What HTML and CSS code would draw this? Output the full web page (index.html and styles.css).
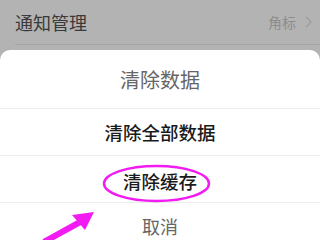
FILE: index.html
```html
<!DOCTYPE html>
<html lang="zh">
<head>
<meta charset="utf-8">
<link rel="stylesheet" href="styles.css">
</head>
<body>
<div class="screen">
  <div class="bg">
    <div class="row">
      <span class="row-label">通知管理</span>
      <span class="row-value">角标<svg class="chev" width="7" height="12" viewBox="0 0 7 12"><polyline points="1,1 6,6 1,11" fill="none" stroke="#9a9a9a" stroke-width="1.2"/></svg></span>
    </div>
  </div>
  <div class="sheet">
    <div class="sheet-title">清除数据</div>
    <div class="sheet-item">清除全部数据</div>
    <div class="sheet-item item-cache">清除缓存</div>
    <div class="sheet-cancel">取消</div>
  </div>
  <svg class="mark" width="320" height="240" viewBox="0 0 320 240">
    <ellipse cx="156.5" cy="183.5" rx="52.5" ry="17.5" fill="none" stroke="#f21cf2" stroke-width="2.5"/>
    <line x1="44" y1="242" x2="82" y2="221" stroke="#f21cf2" stroke-width="6"/>
    <polygon points="94,212 72,215 85,230" fill="#f21cf2"/>
  </svg>
</div>
</body>
</html>
```
FILE: styles.css
```css
html, body {
  margin: 0;
  padding: 0;
}
body {
  font-family: "Noto Sans CJK SC", "Noto Sans", sans-serif;
  background: #b3b3b3;
}
.screen {
  position: relative;
  width: 320px;
  height: 240px;
  overflow: hidden;
  background: #b3b3b3;
}
.bg {
  height: 50px;
}
.row {
  height: 45px;
  margin-left: 15px;
  padding-right: 8px;
  border-bottom: 1px solid #a6a6a6;
  display: flex;
  align-items: center;
  justify-content: space-between;
  box-sizing: border-box;
}
.row-label {
  font-size: 18px;
  color: #3a3a3a;
}
.row-value {
  font-size: 14px;
  color: #8c8c8c;
  display: flex;
  align-items: center;
}
.chev {
  margin-left: 9px;
  display: block;
}
.sheet {
  background: #fff;
  border-radius: 10px 10px 0 0;
  display: flex;
  flex-direction: column;
}
.sheet-title {
  height: 58px;
  display: flex;
  align-items: center;
  justify-content: center;
  font-size: 20px;
  color: #666;
  border-bottom: 1px solid #ececec;
}
.sheet-item {
  height: 46px;
  display: flex;
  align-items: center;
  justify-content: center;
  font-size: 18.5px;
  font-weight: 500;
  color: #1a1a1a;
  border-bottom: 1px solid #ececec;
}
.item-cache {
  height: 47px;
  padding-top: 4px;
  box-sizing: border-box;
}
.sheet-cancel {
  height: 46px;
  display: flex;
  align-items: center;
  justify-content: center;
  font-size: 18px;
  color: #666;
}
.mark {
  position: absolute;
  left: 0;
  top: 0;
}
```
